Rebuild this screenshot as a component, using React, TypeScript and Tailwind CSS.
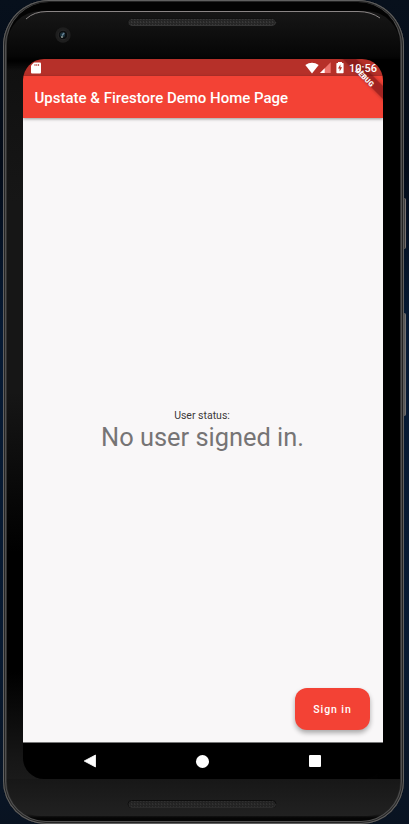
import React from "react";

function Speaker({ bottom = false }: { bottom?: boolean }) {
  return (
    <svg width="150" height="8" viewBox="0 0 150 8" className={bottom ? "opacity-70" : ""}>
      <defs>
        <pattern id={bottom ? "meshB" : "meshT"} width="3" height="3" patternUnits="userSpaceOnUse">
          <rect width="3" height="3" fill="#262626" />
          <rect width="1" height="2" x="1" fill="#383838" />
          <rect width="1" height="1" x="2" y="1" fill="#303030" />
        </pattern>
      </defs>
      <rect x="1" y="0.5" width="148" height="7" rx="3.5" fill={bottom ? "url(#meshB)" : "url(#meshT)"} stroke={bottom ? "#080808" : "#111"} />
      <path d="M2 5.5Q3 7.5 5 7.5H145Q148 7.5 149 4" fill="none" stroke="#464646" strokeWidth=".7" />
    </svg>
  );
}

function Camera() {
  return (
    <svg width="16" height="16" viewBox="0 0 16 16">
      <circle cx="8" cy="8" r="7.7" fill="#1e1e1e" />
      <circle cx="8" cy="8" r="4.8" fill="#0b0d0f" stroke="#292929" />
      <circle cx="7.5" cy="7.8" r="2.6" fill="#1b3039" />
      <path d="M6.5 8l2-2.5 1.4.5-2.2 3z" fill="#668296" />
      <circle cx="7" cy="10" r=".9" fill="#9ba39c" />
    </svg>
  );
}

function GlassHighlight() {
  return (
    <svg className="absolute left-0 top-0" width="393" height="12" viewBox="0 0 393 12">
      <path d="M19 8Q27 .5 40 .5H351Q364 .5 373 7" fill="none" stroke="#8a8585" />
    </svg>
  );
}

function StatusBar() {
  return (
    <div className="flex h-[17px] shrink-0 items-center bg-[#b63029] pl-[8px] pr-[7px]">
      <svg width="10" height="12" viewBox="0 0 10 12">
        <path d="M3 .5h6q1 0 1 1v9q0 1-1 1H1q-1 0-1-1V3.5z" fill="#fff" />
        <path d="M4 2v2M5.8 2v2M7.6 2v2" stroke="#ba443e" strokeWidth=".9" />
      </svg>
      <svg className="ml-auto" width="14" height="12" viewBox="0 0 14 12">
        <path d="M.3 3Q7-1.7 13.7 3L7 11.4z" fill="#fff" />
      </svg>
      <svg className="ml-px" width="11" height="12" viewBox="0 0 11 12">
        <path d="M0 11L10.7 .3V11z" fill="#ee746e" />
        <path d="M0 11L4.7 6.3V11z" fill="#fff" />
      </svg>
      <svg className="ml-[5px]" width="8" height="12" viewBox="0 0 8 12">
        <path d="M2 1V0h4v1h1q.6 0 .6.6v9q0 .6-.6.6H1q-.6 0-.6-.6v-9Q.4 1 1 1z" fill="#fff" />
        <path d="M4.4 2.4L2 6.4h1.6v3L6.1 5.3H4.4z" fill="#b63029" />
      </svg>
      <span className="relative z-30 ml-[5px] w-[27px] whitespace-nowrap pt-px text-[11px] font-medium leading-[17px] text-white">10:56</span>
    </div>
  );
}

function DebugBanner() {
  return (
    <svg className="absolute right-0 top-0 z-20" width="54" height="54" viewBox="0 0 54 54">
      <defs>
        <filter id="bannerShadow" x="-20%" y="-20%" width="140%" height="140%">
          <feGaussianBlur stdDeviation="1.5" />
        </filter>
      </defs>
      <path d="M10 -3L57 44V29L25 -3z" fill="#000" opacity=".2" filter="url(#bannerShadow)" />
      <path d="M14 0H27L54 27V40z" fill="#88161a" opacity=".55" />
      <text x="35.6" y="20.8" transform="rotate(45 35.6 18.2)" textAnchor="middle" fontFamily="Roboto, sans-serif" fontSize="7.2" fontWeight="900" fill="#fff">DEBUG</text>
    </svg>
  );
}

function Screen() {
  return (
    <div className="relative flex h-[720px] w-[360px] flex-col overflow-hidden rounded-[21px] bg-black">
      <StatusBar />
      <header className="z-10 flex h-[42px] shrink-0 items-center bg-[#f34235] pl-[11.5px] pt-[2px] shadow-[0_1px_3px_rgba(0,0,0,0.4)]">
        <h1 className="whitespace-nowrap text-[15px] font-medium leading-5 text-white">Upstate &amp; Firestore Demo Home Page</h1>
      </header>
      <main className="flex flex-1 flex-col items-center border-b border-[#777] bg-[#f9f7f8] pb-[12px] pt-[291px]">
        <p className="pr-[2px] text-[10.5px] leading-[14px] text-[#3c393a]">User status:</p>
        <p className="whitespace-nowrap pr-[1px] text-[25.4px] leading-[29px] text-[#767475]">No user signed in.</p>
        <button className="mr-[13px] mt-auto flex h-[42px] w-[75px] items-center justify-center self-end rounded-[12px] bg-[#f34235] pt-[2px] text-[10.5px] font-medium tracking-[0.9px] text-white shadow-[0_3px_5px_rgba(0,0,0,0.32)]">Sign in</button>
      </main>
      <nav className="grid h-[36px] shrink-0 grid-cols-3 items-center justify-items-center pl-[11px] pr-[12px]">
        <svg width="14" height="14" viewBox="0 0 14 14"><path d="M12.5 1v12L1.2 7z" fill="#fff" stroke="#fff" strokeWidth=".8" strokeLinejoin="round" /></svg>
        <span className="size-[13px] rounded-full bg-white" />
        <span className="size-[12px] rounded-[1px] bg-white" />
      </nav>
      <DebugBanner />
    </div>
  );
}

export default function App() {
  return (
    <div className="relative flex h-[824px] w-[409px] overflow-hidden bg-[linear-gradient(180deg,#07101c_0,#030b18_20%,#061a34_40%,#081a31_80%,#091321_100%)] pl-[3px]" style={{ fontFamily: 'Roboto, "Liberation Sans", sans-serif' }}>
      <div className="absolute left-[403px] top-[198px] h-[51px] w-[3px] rounded-r-[2px] border-r border-[#77706f] bg-[#393939]" />
      <div className="absolute left-[403px] top-[313px] h-[103px] w-[3px] rounded-r-[2px] border-r border-[#737070] bg-[#555]" />
      <div className="relative h-[824px] w-[401px] rounded-[46px_46px_43px_43px] bg-[#303030] px-[4px] pb-[3px] pt-[2px] shadow-[inset_0_0_0_1px_#606060,inset_0_0_0_2px_#242424,inset_0_0_0_3px_#505050]">
        <div className="h-full rounded-[42px_42px_39px_39px] bg-[linear-gradient(180deg,#030303_0,#030303_52px,#101010_60px,#161616_200px,#161616_390px,#000_550px,#000_670px,#171717_760px,#202020_812px,#050505_816px)] pt-[9px]">
          <div className="relative flex h-[805px] flex-col items-center overflow-hidden rounded-[34px] bg-[linear-gradient(180deg,#171717_0,#060606_45px,#000_50px,transparent_60px)]">
            <GlassHighlight />
            <div className="flex h-[48px] w-full shrink-0 justify-center pr-[3px] pt-[7px]"><Speaker /></div>
            <div className="flex w-full shrink-0 bg-[linear-gradient(90deg,transparent_50%,#000_95%)] pl-[16px]"><Screen /></div>
            <div className="flex w-full flex-1 justify-center bg-[linear-gradient(180deg,#171717,#212121)] pr-[3px] pt-[21px]"><Speaker bottom /></div>
          </div>
        </div>
        <div className="absolute left-[52px] top-[27px]"><Camera /></div>
      </div>
    </div>
  );
}
